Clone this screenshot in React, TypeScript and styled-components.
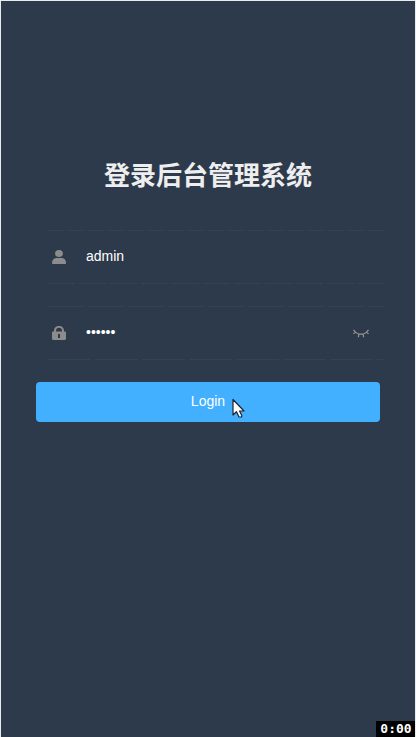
import React, { useState } from 'react';
import styled, { createGlobalStyle } from 'styled-components';

const GlobalStyle = createGlobalStyle`
  *, *::before, *::after { box-sizing: border-box; }
  body {
    margin: 0;
    background: #2d3a4b;
    font-family: "Liberation Sans", "Noto Sans CJK SC", sans-serif;
  }
`;

const Page = styled.main`
  position: relative;
  min-height: 100vh;
  border: 1px solid #e8ecec;
  border-bottom: 0;
  background: #2d3a4b;
  overflow: hidden;
`;

const LoginForm = styled.form`
  display: flex;
  flex-direction: column;
  gap: 22px;
  max-width: 520px;
  margin: 0 auto;
  padding: 156px 35px 0;
`;

const Title = styled.h1`
  margin: 0 0 17px;
  color: #eee;
  font-family: "Noto Sans CJK SC", sans-serif;
  font-size: 26px;
  font-weight: 700;
  line-height: 34px;
  text-align: center;
`;

const Field = styled.div<{ $top: number; $bottom: number }>`
  position: relative;
  display: flex;
  align-items: center;
  height: 54px;
  padding: 0 11px 0 16px;

  &::before,
  &::after {
    content: "";
    position: absolute;
    left: 12px;
    right: -5px;
    height: 1px;
  }
  &::before {
    top: 0;
    background: repeating-linear-gradient(90deg, #334254 0 ${p => p.$top}px, transparent 0 ${p => p.$top + 4}px);
  }
  &::after {
    bottom: 0;
    background: repeating-linear-gradient(90deg, #334254 0 ${p => p.$bottom}px, transparent 0 ${p => p.$bottom + 4}px);
  }
`;

const FieldIcon = styled.label`
  display: flex;
  flex: none;
  width: 14px;
  color: #8c8c8c;
`;

const Input = styled.input`
  flex: 1;
  min-width: 0;
  height: 48px;
  margin-left: 5px;
  padding: 0 15px 2px;
  border: 0;
  outline: 0;
  background: transparent;
  color: #fff;
  caret-color: #fff;
  font-family: "Liberation Sans", sans-serif;
  font-size: 14px;
`;

const EyeButton = styled.button`
  display: flex;
  flex: none;
  padding: 0;
  border: 0;
  background: none;
  color: #989690;
  cursor: pointer;
`;

const Submit = styled.button`
  position: relative;
  height: 40px;
  padding: 0 0 2px;
  border: 0;
  border-radius: 4px;
  background: #42b0ff;
  color: #fff;
  font-family: "Liberation Sans", sans-serif;
  font-size: 14px;
  line-height: 38px;
`;

const Pointer = styled.svg`
  position: absolute;
  top: 16px;
  left: calc(50% + 24px);
`;

const Timer = styled.time`
  position: absolute;
  right: -1px;
  bottom: 0;
  width: 40px;
  background: #000;
  color: #fff;
  font-family: "DejaVu Sans Mono", monospace;
  font-size: 13px;
  font-weight: 700;
  line-height: 16px;
  text-align: center;
`;

const UserIcon = () => (
  <svg width="14" height="14" viewBox="0 0 14 14" fill="currentColor" aria-hidden="true">
    <ellipse cx="7" cy="3.5" rx="3.9" ry="3.5" />
    <path d="M0 13.2c0-3 1.6-5.2 4.2-5.2h5.6c2.6 0 4.2 2.2 4.2 5.2 0 .5-.3.8-.8.8H.8c-.5 0-.8-.3-.8-.8z" />
  </svg>
);

const LockIcon = () => (
  <svg width="14" height="14" viewBox="0 0 14 14" fill="currentColor" aria-hidden="true">
    <path d="M2 6V4.7C2 2 4.1 0 7 0s5 2 5 4.7V6h-2V4.8C10 3 8.8 1.8 7 1.8S4 3 4 4.8V6z" />
    <path
      fillRule="evenodd"
      d="M1.2 5.4h11.6c.7 0 1.2.5 1.2 1.2v6.2c0 .7-.5 1.2-1.2 1.2H1.2C.5 14 0 13.5 0 12.8V6.6c0-.7.5-1.2 1.2-1.2zM6 8v4h2V8z"
    />
  </svg>
);

const ClosedEyeIcon = () => (
  <svg width="16" height="9" viewBox="0 0 16 9" fill="none" stroke="currentColor" strokeWidth="1.2" aria-hidden="true">
    <path d="M.5.7C2.2 3.500 4.800 5.200 8 5.200s5.800-1.700 7.500-4.500M2.600 3.100L.5 4.700M13.400 3.100l2.100 1.600M5.800 5L5.400 8.200M10.200 5l.4 3.200" />
  </svg>
);

export default function App() {
  const [username, setUsername] = useState('admin');
  const [password, setPassword] = useState('111111');
  const [visible, setVisible] = useState(false);

  return (
    <>
      <GlobalStyle />
      <Page>
        <LoginForm onSubmit={e => e.preventDefault()}>
          <Title>登录后台管理系统</Title>
          <Field $top={16} $bottom={27}>
            <FieldIcon htmlFor="username" aria-label="Username">
              <UserIcon />
            </FieldIcon>
            <Input id="username" value={username} onChange={e => setUsername(e.target.value)} autoComplete="off" />
          </Field>
          <Field $top={36} $bottom={43}>
            <FieldIcon htmlFor="password" aria-label="Password">
              <LockIcon />
            </FieldIcon>
            <Input
              id="password"
              type={visible ? 'text' : 'password'}
              value={password}
              onChange={e => setPassword(e.target.value)}
              autoComplete="off"
            />
            <EyeButton type="button" aria-label="Toggle password visibility" onClick={() => setVisible(v => !v)}>
              <ClosedEyeIcon />
            </EyeButton>
          </Field>
          <Submit type="submit">
            Login
            <Pointer width="13" height="20" viewBox="0 0 13 20" aria-hidden="true">
              <path
                d="M1 1.5V17l3.500-3.300L7 19h2.500l.3-1.400-2.300-4.600H12z"
                fill="#fff"
                stroke="#20242c"
                strokeWidth="1.2"
                strokeLinejoin="round"
              />
            </Pointer>
          </Submit>
        </LoginForm>
        <Timer>0:00</Timer>
      </Page>
    </>
  );
}
